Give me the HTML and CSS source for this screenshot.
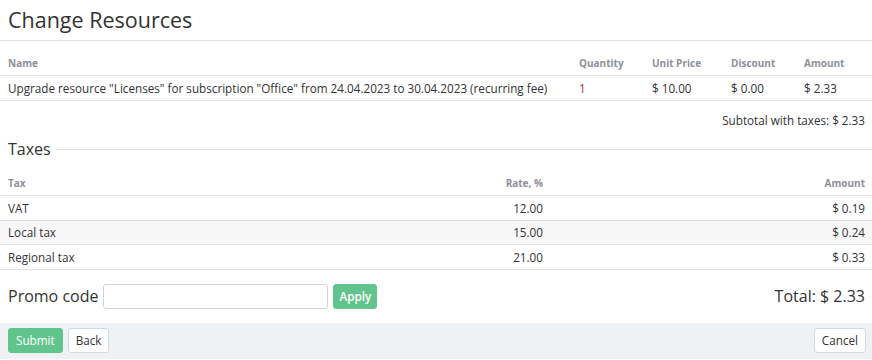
FILE: index.html
```html
<!DOCTYPE html>
<html lang="en">
<head>
    <meta charset="UTF-8">
    <title>Change Resources</title>
    <link rel="stylesheet" href="styles.css">
</head>
<body>
    <header class="page-header">
        <h1>Change Resources</h1>
    </header>

    <table class="grid order-lines">
        <colgroup>
            <col class="col-name">
            <col class="col-qty">
            <col class="col-price">
            <col class="col-discount">
            <col>
        </colgroup>
        <thead>
            <tr>
                <th>Name</th>
                <th>Quantity</th>
                <th>Unit Price</th>
                <th>Discount</th>
                <th>Amount</th>
            </tr>
        </thead>
        <tbody>
            <tr>
                <td>Upgrade resource "Licenses" for subscription "Office" from 24.04.2023 to 30.04.2023 (recurring fee)</td>
                <td class="qty">1</td>
                <td>$ 10.00</td>
                <td>$ 0.00</td>
                <td>$ 2.33</td>
            </tr>
        </tbody>
    </table>

    <div class="subtotal">Subtotal with taxes: $ 2.33</div>

    <h2 class="section-title">Taxes</h2>

    <table class="grid taxes">
        <colgroup>
            <col class="col-tax">
            <col class="col-rate">
            <col>
        </colgroup>
        <thead>
            <tr>
                <th>Tax</th>
                <th class="num">Rate, %</th>
                <th class="num">Amount</th>
            </tr>
        </thead>
        <tbody>
            <tr>
                <td>VAT</td>
                <td class="num">12.00</td>
                <td class="num">$ 0.19</td>
            </tr>
            <tr>
                <td>Local tax</td>
                <td class="num">15.00</td>
                <td class="num">$ 0.24</td>
            </tr>
            <tr>
                <td>Regional tax</td>
                <td class="num">21.00</td>
                <td class="num">$ 0.33</td>
            </tr>
        </tbody>
    </table>

    <div class="summary">
        <div class="promo">
            <label for="promo">Promo code</label>
            <input type="text" id="promo">
            <button class="btn btn-primary btn-apply">Apply</button>
        </div>
        <div class="total">Total: $ 2.33</div>
    </div>

    <footer class="actions">
        <div class="actions-left">
            <button class="btn btn-primary">Submit</button>
            <button class="btn">Back</button>
        </div>
        <button class="btn">Cancel</button>
    </footer>
</body>
</html>
```

FILE: styles.css
```css
:root {
    --text: #333;
    --muted: #8d9197;
    --line: #dde2e8;
    --cell-line: #e2e2e2;
    --green: #62c48d;
    --footer: #eff2f5;
}

* {
    margin: 0;
    padding: 0;
    box-sizing: border-box;
}

body {
    font-family: 'Open Sans', 'Noto Sans', sans-serif;
    font-size: 11.7px;
    line-height: 16px;
    color: var(--text);
    background: #fff;
}

.page-header {
    padding: 5px 8px;
    border-bottom: 1px solid var(--line);
}

.page-header h1 {
    font-size: 21.5px;
    font-weight: normal;
    line-height: 30px;
}

.grid {
    width: 100%;
    border-collapse: collapse;
    table-layout: fixed;
}

.grid th {
    font-size: 10px;
    font-weight: bold;
    color: var(--muted);
    text-align: left;
    padding: 3px 8px 4px;
    line-height: 16px;
}

.grid td {
    padding: 4px 8px;
}

.grid th,
.grid td {
    border-bottom: 1px solid var(--cell-line);
    white-space: nowrap;
}

.order-lines {
    margin-top: 11px;
}

.col-name { width: 571px; }
.col-qty { width: 73px; }
.col-price { width: 79px; }
.col-discount { width: 73px; }

.qty {
    color: #a33a3a;
}

.subtotal {
    text-align: right;
    padding-right: 7px;
    margin-top: 11px;
}

.section-title {
    display: flex;
    align-items: center;
    margin: 10px 0 0;
    padding-left: 8px;
    font-size: 16px;
    font-weight: normal;
    line-height: 22px;
}

.section-title::after {
    content: '';
    flex: 1;
    height: 1px;
    margin: 1px 0 0 5px;
    background: var(--line);
}

.taxes {
    margin-top: 12px;
}

.taxes td {
    padding: 3.5px 8px 4px;
}

.col-tax { width: 300px; }
.col-rate { width: 251px; }

.taxes .num {
    text-align: right;
}

.taxes th.num:last-child,
.taxes td.num:last-child {
    padding-right: 7px;
}

.taxes tbody tr:nth-child(2) {
    background: #f7f7f7;
}

.summary {
    display: flex;
    justify-content: space-between;
    align-items: center;
    height: 25px;
    margin: 14px 0 14px;
    padding: 0 7px 0 8px;
}

.promo {
    display: flex;
    align-items: center;
}

.promo label {
    font-size: 16px;
    line-height: 22px;
    margin-right: 5px;
}

.promo input {
    width: 225px;
    height: 25px;
    border: 1px solid #cfd4da;
    border-radius: 3px;
    font-family: inherit;
    margin-right: 5px;
}

.total {
    font-size: 16px;
    line-height: 22px;
}

.btn {
    font-family: inherit;
    font-size: 11.7px;
    line-height: 17px;
    height: 25px;
    padding: 3px 7px;
    border: 1px solid #d3d9df;
    border-radius: 3px;
    background: #fff;
    color: var(--text);
    cursor: pointer;
}

.btn-primary {
    background: var(--green);
    border-color: var(--green);
    color: #fff;
}

.btn-apply {
    font-weight: 600;
    padding: 3px 5px;
}

.actions {
    display: flex;
    justify-content: space-between;
    align-items: center;
    background: var(--footer);
    padding: 5px 6px 6px 8px;
}

.actions-left {
    display: flex;
    gap: 5px;
}
```
